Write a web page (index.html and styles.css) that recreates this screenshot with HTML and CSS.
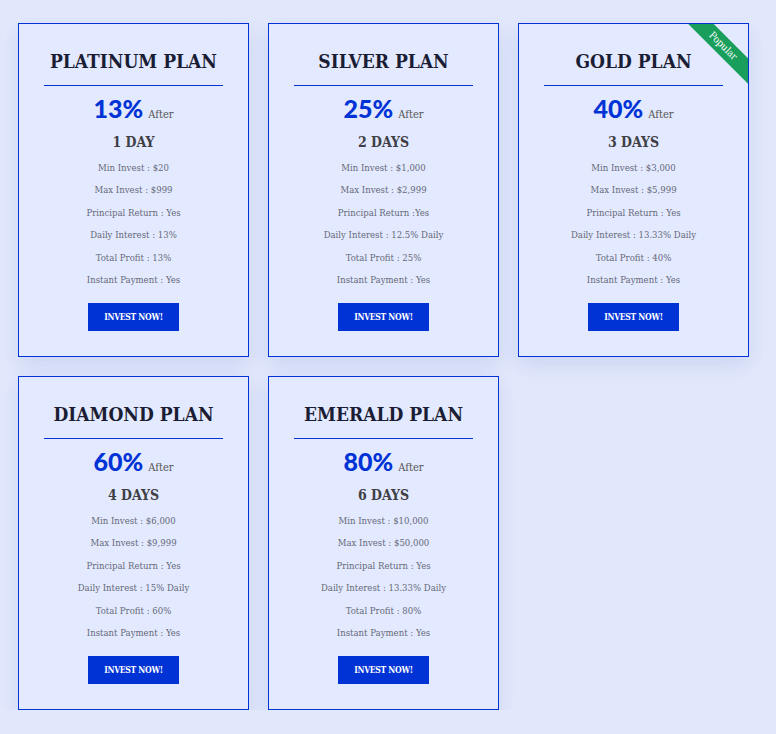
FILE: index.html
```html
<!DOCTYPE html>
<html>
<head>
<meta charset="utf-8">
<link rel="stylesheet" href="styles.css">
</head>
<body>
<div class="grid">
  <div class="card">
    <h3 class="title">PLATINUM PLAN</h3>
    <div class="rate"><span class="pct">13%</span> <span class="after">After</span></div>
    <div class="days">1 DAY</div>
    <ul class="list">
      <li>Min Invest : $20</li>
      <li>Max Invest : $999</li>
      <li>Principal Return : Yes</li>
      <li>Daily Interest : 13%</li>
      <li>Total Profit : 13%</li>
      <li>Instant Payment : Yes</li>
    </ul>
    <a class="btn" href="#">INVEST NOW!</a>
  </div>
  <div class="card">
    <h3 class="title">SILVER PLAN</h3>
    <div class="rate"><span class="pct">25%</span> <span class="after">After</span></div>
    <div class="days">2 DAYS</div>
    <ul class="list">
      <li>Min Invest : $1,000</li>
      <li>Max Invest : $2,999</li>
      <li>Principal Return :Yes</li>
      <li>Daily Interest : 12.5% Daily</li>
      <li>Total Profit : 25%</li>
      <li>Instant Payment : Yes</li>
    </ul>
    <a class="btn" href="#">INVEST NOW!</a>
  </div>
  <div class="card">
    <div class="ribbon">Popular</div>
    <h3 class="title">GOLD PLAN</h3>
    <div class="rate"><span class="pct">40%</span> <span class="after">After</span></div>
    <div class="days">3 DAYS</div>
    <ul class="list">
      <li>Min Invest : $3,000</li>
      <li>Max Invest : $5,999</li>
      <li>Principal Return : Yes</li>
      <li>Daily Interest : 13.33% Daily</li>
      <li>Total Profit : 40%</li>
      <li>Instant Payment : Yes</li>
    </ul>
    <a class="btn" href="#">INVEST NOW!</a>
  </div>
  <div class="card">
    <h3 class="title">DIAMOND PLAN</h3>
    <div class="rate"><span class="pct">60%</span> <span class="after">After</span></div>
    <div class="days">4 DAYS</div>
    <ul class="list">
      <li>Min Invest : $6,000</li>
      <li>Max Invest : $9,999</li>
      <li>Principal Return : Yes</li>
      <li>Daily Interest : 15% Daily</li>
      <li>Total Profit : 60%</li>
      <li>Instant Payment : Yes</li>
    </ul>
    <a class="btn" href="#">INVEST NOW!</a>
  </div>
  <div class="card">
    <h3 class="title">EMERALD PLAN</h3>
    <div class="rate"><span class="pct">80%</span> <span class="after">After</span></div>
    <div class="days">6 DAYS</div>
    <ul class="list">
      <li>Min Invest : $10,000</li>
      <li>Max Invest : $50,000</li>
      <li>Principal Return : Yes</li>
      <li>Daily Interest : 13.33% Daily</li>
      <li>Total Profit : 80%</li>
      <li>Instant Payment : Yes</li>
    </ul>
    <a class="btn" href="#">INVEST NOW!</a>
  </div>
</div>
</body>
</html>
```
FILE: styles.css
```css
html, body {
  margin: 0;
  padding: 0;
  background: #e2e8fc;
}
body {
  padding: 23px 18px 0;
  font-family: "DejaVu Serif", serif;
}
.grid {
  display: grid;
  grid-template-columns: repeat(3, 231px);
  column-gap: 19px;
  row-gap: 19px;
}
.card {
  position: relative;
  overflow: hidden;
  box-sizing: border-box;
  height: 334px;
  background: #e3e9ff;
  border: 1px solid #0033d6;
  box-shadow: 0 8px 20px rgba(40, 70, 170, 0.12);
  padding: 25px 25px 25px;
  text-align: center;
}
.title {
  margin: 0;
  font-family: "DejaVu Serif Condensed", "DejaVu Serif", serif;
  font-weight: bold;
  font-size: 19px;
  line-height: 24px;
  color: #1a1d33;
  padding-bottom: 12px;
  border-bottom: 1px solid #0033d6;
}
.rate {
  margin-top: 7px;
  height: 30px;
  line-height: 30px;
}
.pct {
  font-family: "Lato", sans-serif;
  font-weight: 900;
  font-size: 25px;
  color: #0033d6;
}
.after {
  font-family: "DejaVu Serif Condensed", "DejaVu Serif", serif;
  font-size: 11px;
  color: #555;
}
.days {
  margin-top: 9px;
  font-family: "DejaVu Serif Condensed", "DejaVu Serif", serif;
  font-weight: bold;
  font-size: 14px;
  line-height: 20px;
  color: #3f3f46;
}
.list {
  list-style: none;
  margin: 5px 0 0;
  padding: 0;
  font-family: "DejaVu Serif Condensed", "DejaVu Serif", serif;
  font-size: 9.5px;
  line-height: 22.4px;
  color: #666a78;
}
.btn {
  display: inline-block;
  margin-top: 12px;
  width: 91px;
  height: 28px;
  line-height: 28px;
  background: #0033d6;
  color: #fff;
  font-family: "DejaVu Serif Condensed", "DejaVu Serif", serif;
  font-weight: bold;
  font-size: 8.5px;
  letter-spacing: -0.3px;
  text-decoration: none;
}
.ribbon {
  position: absolute;
  top: 13px;
  right: -25px;
  width: 100px;
  height: 18px;
  line-height: 18px;
  background: #1a9e5c;
  color: #fff;
  font-family: "DejaVu Serif Condensed", "DejaVu Serif", serif;
  font-size: 10px;
  text-align: center;
  transform: rotate(45deg);
}
```
